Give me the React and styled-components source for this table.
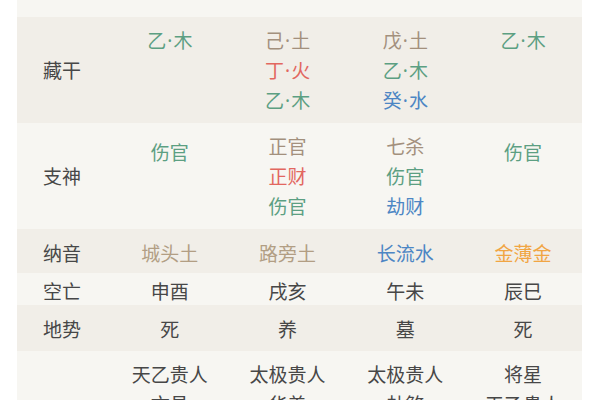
import styled, {createGlobalStyle} from 'styled-components';

const GlobalStyle = createGlobalStyle`
  html, body {
    margin: 0;
    padding: 0;
    background: #ffffff;
    overflow: hidden;
  }
  body {
    font-family: "Noto Sans CJK SC", "Noto Sans", sans-serif;
  }
`;

const colors = {
    wood: '#5c9f82',
    earth: '#a3907d',
    fire: '#e2675f',
    water: '#4d86c4',
    metal: '#f1a543',
    sand: '#b29e84',
    text: '#474747',
};

const Page = styled.div`
  width: 565px;
  margin: -28px 0 0 17px;
`;

const Table = styled.div`
  display: flex;
  flex-direction: column;
`;

const Row = styled.div`
  display: grid;
  grid-template-columns: 94px repeat(4, 1fr);
  background: ${(p) => (p.$dark ? '#f1eee8' : '#f7f6f2')};
  padding: ${(p) => p.$pad || '8px 0'};
`;

const Label = styled.div`
  display: flex;
  align-items: center;
  padding-left: 26px;
  font-size: 19px;
  line-height: ${(p) => p.$lh || 30}px;
  color: ${colors.text};
`;

const Cell = styled.div`
  display: flex;
  flex-direction: column;
  align-items: center;
  padding-top: ${(p) => p.$shift || 0}px;
`;

const Item = styled.span`
  display: block;
  height: ${(p) => p.$lh || 30}px;
  font-size: 19px;
  line-height: ${(p) => p.$lh || 30}px;
  color: ${(p) => p.$color || colors.text};
  white-space: nowrap;
`;

// the dot between stem and element is narrow in the original
const Dot = styled.span`
  font-family: "Noto Sans", sans-serif;
  line-height: 0;
  margin: 0 1px;
`;

const rows = [
    {
        label: '',
        pad: '2px 0 13px',
        cells: [
            [['巳·火', colors.fire]],
            [['未·土', colors.earth]],
            [['辰·土', colors.earth]],
            [['卯·木', colors.wood]],
        ],
    },
    {
        label: '藏干',
        dark: true,
        cells: [
            [['乙·木', colors.wood]],
            [['己·土', colors.earth], ['丁·火', colors.fire], ['乙·木', colors.wood]],
            [['戊·土', colors.earth], ['乙·木', colors.wood], ['癸·水', colors.water]],
            [['乙·木', colors.wood]],
        ],
    },
    {
        label: '支神',
        shift: 6,
        cells: [
            [['伤官', colors.wood]],
            [['正官', colors.earth], ['正财', colors.fire], ['伤官', colors.wood]],
            [['七杀', colors.earth], ['伤官', colors.wood], ['劫财', colors.water]],
            [['伤官', colors.wood]],
        ],
    },
    {
        label: '纳音',
        dark: true,
        pad: '9px 0 5px',
        cells: [
            [['城头土', colors.sand]],
            [['路旁土', colors.sand]],
            [['长流水', colors.water]],
            [['金薄金', colors.metal]],
        ],
    },
    {
        label: '空亡',
        pad: '4px 0 0',
        lh: 28,
        cells: [[['申酉']], [['戌亥']], [['午未']], [['辰巳']]],
    },
    {
        label: '地势',
        dark: true,
        pad: '9px 0 7px',
        cells: [[['死']], [['养']], [['墓']], [['死']]],
    },
    {
        label: '神煞',
        pad: '8px 0',
        hideLabel: true,
        cells: [
            [['天乙贵人'], ['文昌'], ['亡神']],
            [['太极贵人'], ['华盖'], ['天医']],
            [['太极贵人'], ['劫煞'], ['天医']],
            [['将星'], ['天乙贵人'], ['天厨']],
        ],
    },
];

const renderText = (t) => {
    const parts = t.split('·');
    if (parts.length < 2) return t;
    return (
        <>
            {parts[0]}
            <Dot>·</Dot>
            {parts[1]}
        </>
    );
};

export default function App() {
    return (
        <>
            <GlobalStyle/>
            <Page>
                <Table>
                    {rows.map((row, i) => (
                        <Row key={i} $dark={row.dark} $pad={row.pad}>
                            <Label $lh={row.lh}>{row.hideLabel ? '' : row.label}</Label>
                            {row.cells.map((items, j) => (
                                <Cell key={j} $shift={items.length === 1 ? row.shift : 0}>
                                    {items.map(([t, c], k) => (
                                        <Item key={k} $color={c} $lh={row.lh}>
                                            {renderText(t)}
                                        </Item>
                                    ))}
                                </Cell>
                            ))}
                        </Row>
                    ))}
                </Table>
            </Page>
        </>
    );
}
